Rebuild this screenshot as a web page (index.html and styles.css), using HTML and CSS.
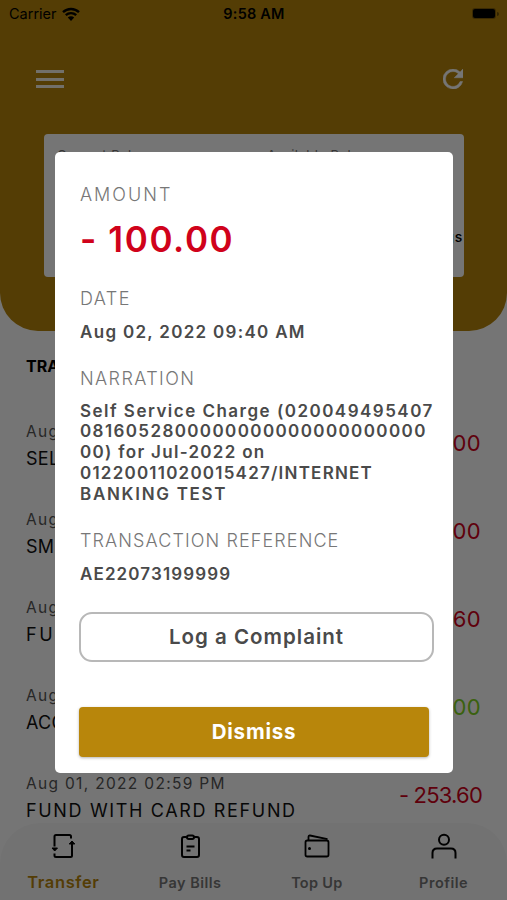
FILE: index.html
```html
<!DOCTYPE html>
<html lang="en">
<head>
  <meta charset="UTF-8">
  <meta name="viewport" content="width=device-width, initial-scale=1.0">
  <title>Transactions</title>
  <link rel="stylesheet" href="styles.css">
</head>
<body>
  <div class="screen">
    <div class="header">
      <div class="status-bar">
        <div class="carrier">
          <span class="carrier-name">Carrier</span>
          <svg width="18" height="14" viewBox="0 0 18 14">
            <path d="M1 5.2a11.5 11.5 0 0 1 16 0M3.8 8.2a7.5 7.5 0 0 1 10.4 0" fill="none" stroke="#000" stroke-width="2.4"/>
            <path d="M9 14L5.8 10.6a4.6 4.6 0 0 1 6.4 0z"/>
          </svg>
        </div>
        <div class="time">9:58 AM</div>
        <div class="battery"><div class="battery-level"></div><div class="battery-tip"></div></div>
      </div>
      <div class="toolbar">
        <div class="menu-icon"><span></span><span></span><span></span></div>
        <svg class="refresh-icon" width="20" height="20" viewBox="4 4 16 16">
          <path fill="#fff" stroke="#fff" stroke-width="0.4" d="M17.65 6.35A7.96 7.96 0 0 0 12 4a8 8 0 1 0 7.73 10h-2.08A6 6 0 1 1 12 6c1.66 0 3.14.69 4.22 1.78L13 11h7V4z"/>
        </svg>
      </div>
      <div class="balance-card">
        <div class="balance-labels">
          <div class="balance-label">Current Balance</div>
          <div class="balance-label">Available Balance</div>
        </div>
        <div class="savings">Savings</div>
      </div>
    </div>

    <div class="transactions">
      <div class="list-title">TRANSACTIONS</div>
      <div class="item">
        <div>
          <div class="item-date">Aug 02</div>
          <div class="item-name narrow">SELF</div>
        </div>
        <div class="item-amount wide">- 100.00</div>
      </div>
      <div class="item">
        <div>
          <div class="item-date">Aug 02</div>
          <div class="item-name narrow">SMS</div>
        </div>
        <div class="item-amount wide">- 100.00</div>
      </div>
      <div class="item">
        <div>
          <div class="item-date">Aug 01</div>
          <div class="item-name spaced">FUND</div>
        </div>
        <div class="item-amount wide">- 253.60</div>
      </div>
      <div class="item">
        <div>
          <div class="item-date">Aug 01</div>
          <div class="item-name narrow">ACC</div>
        </div>
        <div class="item-amount wide credit">100.00</div>
      </div>
      <div class="item">
        <div>
          <div class="item-date">Aug 01, 2022 02:59 PM</div>
          <div class="item-name">FUND WITH CARD REFUND</div>
        </div>
        <div class="item-amount">- 253.60</div>
      </div>
    </div>

    <div class="bottom-nav">
      <div class="nav-item active">
        <svg width="26" height="26" viewBox="0 0 26 26" fill="none" stroke="#000" stroke-width="2">
          <path d="M4.500 13.500V3.500Q4.500 2 6 2H19.500Q21 2 21 3.500V5.500M22 10V22.500Q22 24 20.500 24H6Q4.500 24 4.500 22.500V20.500"/>
          <path d="M2 15H7.500L4.700 18zM19.200 11L22 8L24.800 11z" fill="#000" stroke-width="1"/>
        </svg>
        <div class="nav-label">Transfer</div>
      </div>
      <div class="nav-item">
        <svg width="26" height="26" viewBox="0 0 26 26" fill="none" stroke="#000" stroke-width="2">
          <path d="M10 4H7Q5 4 5 6V22Q5 24 7 24H20Q22 24 22 22V6Q22 4 20 4H17"/>
          <rect x="10" y="2.500" width="7" height="3.500" rx="1.700"/>
          <path d="M9.500 13.500H17.500M9.500 17.500H13.500" stroke-width="1.800"/>
        </svg>
        <div class="nav-label">Pay Bills</div>
      </div>
      <div class="nav-item top-up">
        <svg width="26" height="26" viewBox="0 0 26 26" fill="none" stroke="#000" stroke-width="1.800">
          <rect x="1.500" y="7.500" width="23" height="16" rx="1.800"/>
          <path d="M4.500 7V3.800Q4.700 2.300 6 2.500L23.500 6.200"/>
          <circle cx="5.500" cy="15.500" r="1.500" fill="#000" stroke="none"/>
        </svg>
        <div class="nav-label">Top Up</div>
      </div>
      <div class="nav-item">
        <svg width="26" height="26" viewBox="0 0 26 26" fill="none" stroke="#000" stroke-width="2">
          <circle cx="13" cy="6.800" r="5"/>
          <path d="M1.500 25.500V20Q1.500 15.500 6 15.500H20Q24.500 15.500 24.500 20V25.500"/>
        </svg>
        <div class="nav-label">Profile</div>
      </div>
    </div>
  </div>

  <div class="overlay">
    <div class="modal">
      <div class="label amount-label">AMOUNT</div>
      <div class="amount">- 100.00</div>
      <div class="label date-label">DATE</div>
      <div class="value date-value">Aug 02, 2022 09:40 AM</div>
      <div class="label narration-label">NARRATION</div>
      <div class="value narration">
        <div class="line-1">Self Service Charge (020049495407</div>
        <div class="line-2">0816052800000000000000000000</div>
        <div class="line-3">00) for Jul-2022 on</div>
        <div class="line-4">01220011020015427/INTERNET</div>
        <div class="line-5">BANKING TEST</div>
      </div>
      <div class="label reference-label">TRANSACTION REFERENCE</div>
      <div class="value reference">AE22073199999</div>
      <button class="complaint-button">Log a Complaint</button>
      <button class="dismiss-button">Dismiss</button>
    </div>
  </div>
</body>
</html>
```

FILE: styles.css
```css
* {
  box-sizing: border-box;
}

body {
  margin: 0;
  font-family: Inter, "Liberation Sans", sans-serif;
  background-color: #fff;
}

.screen {
  height: 900px;
  display: flex;
  flex-direction: column;
  overflow: hidden;
}

.header {
  height: 331px;
  flex-shrink: 0;
  background-color: #b8860b;
  border-radius: 0 0 38px 38px;
}

.status-bar {
  display: grid;
  grid-template-columns: 1fr auto 1fr;
  align-items: center;
  height: 27px;
  padding: 0 8px 0 9px;
  font-size: 14.5px;
}

.carrier {
  display: flex;
  align-items: center;
  gap: 5px;
}

.time {
  font-weight: 600;
  letter-spacing: 0.2px;
}

.battery {
  justify-self: end;
  display: flex;
  align-items: center;
  gap: 2px;
}

.battery-level {
  width: 22px;
  height: 9px;
  border-radius: 2px;
  background-color: #000;
  box-shadow: 0 0 0 1px rgba(0, 0, 0, 0.3);
}

.battery-tip {
  width: 2px;
  height: 4px;
  border-radius: 0 2px 2px 0;
  background-color: rgba(0, 0, 0, 0.4);
}

.toolbar {
  display: flex;
  justify-content: space-between;
  align-items: center;
  height: 104px;
  padding: 0 44px 0 36px;
}

.menu-icon {
  display: flex;
  flex-direction: column;
  gap: 4.5px;
  opacity: 0.9;
}

.menu-icon span {
  width: 28px;
  height: 3px;
  background-color: #fff;
}

.balance-card {
  height: 143px;
  margin: 3px 43px 0 44px;
  padding: 12px 1px 0 13px;
  border-radius: 4px;
  background-color: #fff;
}

.balance-labels {
  display: grid;
  grid-template-columns: 210px 1fr;
  font-size: 13px;
  line-height: 18px;
  letter-spacing: 0.5px;
  color: #777;
}

.savings {
  margin-top: 64px;
  font-size: 14px;
  font-weight: 500;
  letter-spacing: 0.8px;
  text-align: right;
}

.transactions {
  padding: 24px 26px 0;
}

.list-title {
  height: 63px;
  font-size: 16px;
  font-weight: 700;
  line-height: 22px;
}

.item {
  display: flex;
  justify-content: space-between;
  height: 88px;
}

.item-date {
  margin-top: 4px;
  font-size: 15.5px;
  line-height: 20px;
  letter-spacing: 1.32px;
  color: #555;
}

.item-name {
  margin-top: 6px;
  font-size: 18px;
  line-height: 22px;
  letter-spacing: 1.65px;
  color: #111;
}

.item-name.narrow {
  letter-spacing: 0.3px;
}

.item-name.spaced {
  letter-spacing: 2.5px;
}

.item-amount {
  margin: 12px -1px 0 0;
  font-size: 22px;
  line-height: 26px;
  letter-spacing: -0.8px;
  color: #d0021b;
}

.item-amount.wide {
  margin-right: 0;
  letter-spacing: 0.4px;
}

.item-amount.credit {
  color: #7ed321;
}

.bottom-nav {
  position: absolute;
  top: 823px;
  left: 0;
  width: 507px;
  height: 77px;
  display: grid;
  grid-template-columns: repeat(4, 1fr);
  border-radius: 40px 40px 0 0;
  background-color: #f9f9f9;
}

.nav-item {
  display: flex;
  flex-direction: column;
  align-items: center;
  padding-top: 10px;
}

.nav-label {
  margin-top: 14px;
  font-size: 14.5px;
  font-weight: 600;
  line-height: 20px;
  letter-spacing: 0.5px;
  color: #777;
}

.top-up .nav-label {
  letter-spacing: 0.3px;
}

.active .nav-label {
  margin-top: 13px;
  font-size: 16.5px;
  letter-spacing: 0.6px;
  color: #b8860b;
}

.overlay {
  position: absolute;
  top: 0;
  left: 0;
  width: 507px;
  height: 900px;
  padding: 152px 54px 0 55px;
  background-color: rgba(0, 0, 0, 0.54);
}

.modal {
  height: 621px;
  padding: 31px 19px 0 25px;
  border-radius: 5px;
  background-color: #fff;
  white-space: nowrap;
}

.label {
  font-size: 18px;
  font-weight: 300;
  line-height: 24px;
  letter-spacing: 1.4px;
  color: #777;
}

.amount-label {
  letter-spacing: 2px;
}

.amount {
  margin-top: 7px;
  font-size: 35px;
  font-weight: 600;
  line-height: 50px;
  letter-spacing: 1.6px;
  color: #d0021b;
}

.value {
  font-size: 17px;
  font-weight: 600;
  line-height: 20.7px;
  letter-spacing: 1.3px;
  color: #4a4a4a;
}

.date-label {
  margin-top: 23px;
}

.date-value {
  margin-top: 11px;
}

.narration-label {
  margin-top: 24px;
}

.narration {
  margin-top: 10px;
}

.line-1 {
  letter-spacing: 1.48px;
}

.line-2 {
  letter-spacing: 1.39px;
}

.line-4 {
  letter-spacing: 1.22px;
}

.line-5 {
  letter-spacing: 1.7px;
}

.reference-label {
  margin-top: 25px;
  letter-spacing: 1.1px;
}

.reference {
  margin-top: 11px;
  letter-spacing: 1.12px;
}

.complaint-button,
.dismiss-button {
  display: block;
  height: 50px;
  padding: 0;
  font-family: inherit;
  font-size: 20.5px;
}

.complaint-button {
  width: 355px;
  margin: 27px 0 0 -1px;
  border: 2px solid #b8b8b8;
  border-radius: 13px;
  font-weight: 600;
  letter-spacing: 1px;
  color: #4a4a4a;
  background-color: #fff;
}

.dismiss-button {
  width: 350px;
  margin: 45px 0 0 -1px;
  border: none;
  border-radius: 4px;
  font-weight: 700;
  letter-spacing: 0.8px;
  color: #fff;
  background-color: #b8860b;
  box-shadow: 0 1px 3px rgba(0, 0, 0, 0.3);
}
```
